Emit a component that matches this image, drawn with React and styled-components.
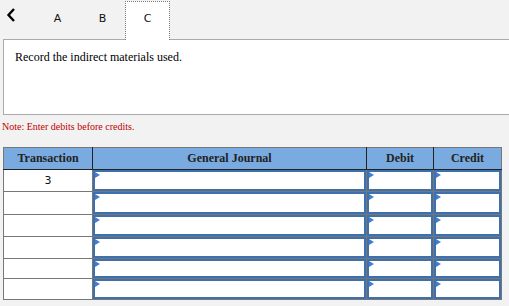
import React from 'react'
import styled, { createGlobalStyle } from 'styled-components'

const Global = createGlobalStyle`
  html, body { margin: 0; padding: 0; background: #f2f2f2; }
  body { font-family: "Liberation Serif", serif; width: 509px; height: 306px; overflow: hidden; }
`;

const Page = styled.div`
  padding: 1px 0 0 3px;
`;

const TabBar = styled.div`
  display: flex;
  align-items: stretch;
  height: 38px;
  position: relative;
  z-index: 1;
`;

const Back = styled.div`
  width: 32px;
  display: flex;
  align-items: flex-start;
  padding-top: 7px;
  padding-left: 3px;
  box-sizing: border-box;
`;

const Tab = styled.div`
  width: 45px;
  box-sizing: border-box;
  display: flex;
  justify-content: center;
  padding-top: 10px;
  font-family: "DejaVu Sans", "Open Sans", sans-serif;
  font-size: 11px;
  color: #111;
  border: 1px dotted ${p => (p.$active ? '#777' : 'transparent')};
  border-bottom: none;
  background: ${p => (p.$active ? '#fff' : 'transparent')};
  height: ${p => (p.$active ? '39px' : '38px')};
`;

const Panel = styled.div`
  height: 76px;
  background: #fff;
  border: 1px solid #aaa;
  border-right: none;
  box-sizing: border-box;
  padding: 10px 0 0 11px;
  font-size: 12px;
  color: #000;
`;

const Note = styled.div`
  color: #c00000;
  font-size: 10px;
  margin: 6px 0 0 -1px;
  height: 26px;
`;

const Table = styled.table`
  border-collapse: collapse;
  table-layout: fixed;
  width: 498px;
  border: 1px solid #777;
`;

const Th = styled.th`
  background: #79abe0;
  height: 21px;
  padding: 0;
  font-size: 12px;
  font-weight: bold;
  color: #222;
  border-right: 1px solid #222;
  border-bottom: 1px solid #222;
  &:last-child { border-right: 1px solid #777; }
`;

const Td = styled.td`
  height: ${p => p.$h}px;
  padding: 0;
  background: #fff;
  border: 1px solid #777;
  text-align: center;
  font-family: "DejaVu Sans", sans-serif;
  font-size: 11px;
  color: #111;
  vertical-align: middle;
`;

const InputTd = styled.td`
  height: ${p => p.$h}px;
  padding: 0;
  border: 1px solid #777;
  background: #777;
`;

const Field = styled.div`
  position: relative;
  box-sizing: border-box;
  height: ${p => p.$h}px;
  background: #fff;
  border: 2px solid #3d70ad;
  &::before {
    content: '';
    position: absolute;
    left: 0;
    top: 0;
    border-left: 5px solid #3f7fd0;
    border-top: 3px solid transparent;
    border-bottom: 3px solid transparent;
  }
`;

const rows = [
  { id: '3', h: 21 },
  { id: '', h: 22 },
  { id: '', h: 21 },
  { id: '', h: 21 },
  { id: '', h: 19 },
  { id: '', h: 20 },
];

const App = () => {
  return (
    <Page>
      <Global />
      <TabBar>
        <Back>
          <svg width="10" height="14" viewBox="0 0 10 14">
            <path d="M8 1 L2.5 7 L8 13" fill="none" stroke="#000" strokeWidth="2.4" />
          </svg>
        </Back>
        <Tab>A</Tab>
        <Tab>B</Tab>
        <Tab $active>C</Tab>
      </TabBar>
      <Panel>Record the indirect materials used.</Panel>
      <Note>Note: Enter debits before credits.</Note>
      <Table>
        <colgroup>
          <col style={{ width: 89 }} />
          <col style={{ width: 274 }} />
          <col style={{ width: 67 }} />
          <col style={{ width: 68 }} />
        </colgroup>
        <thead>
          <tr>
            <Th>Transaction</Th>
            <Th>General Journal</Th>
            <Th>Debit</Th>
            <Th>Credit</Th>
          </tr>
        </thead>
        <tbody>
          {rows.map((r, i) => (
            <tr key={`row${i}`}>
              <Td $h={r.h}>{r.id}</Td>
              <InputTd $h={r.h}><Field $h={r.h} /></InputTd>
              <InputTd $h={r.h}><Field $h={r.h} /></InputTd>
              <InputTd $h={r.h}><Field $h={r.h} /></InputTd>
            </tr>
          ))}
        </tbody>
      </Table>
    </Page>
  )
}

export default App;
